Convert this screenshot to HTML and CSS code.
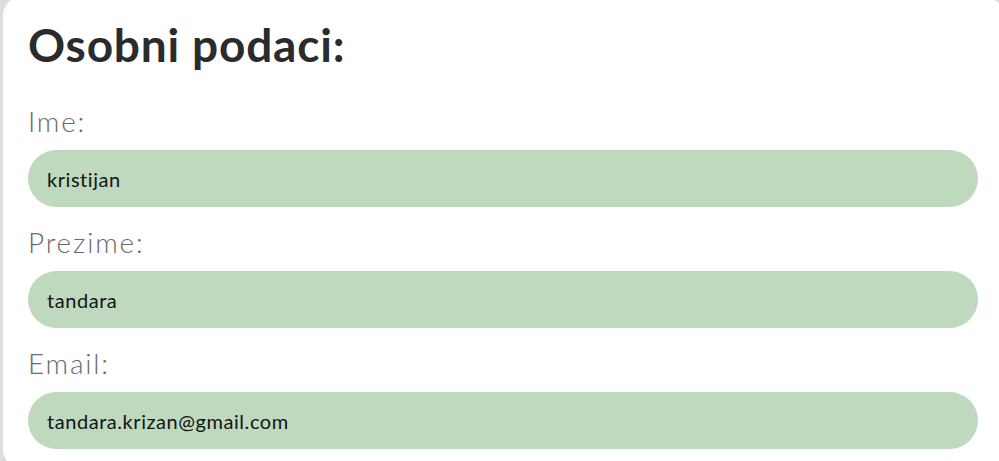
FILE: index.html
```html
<!DOCTYPE html>
<html lang="hr">
<head>
<meta charset="utf-8">
<title>Osobni podaci</title>
<link rel="stylesheet" href="styles.css">
</head>
<body>
<main class="card">
  <h1 class="title">Osobni podaci:</h1>
  <form class="form">
    <div class="field">
      <label class="label" for="ime">Ime:</label>
      <input class="input" id="ime" type="text" value="kristijan">
    </div>
    <div class="field">
      <label class="label" for="prezime">Prezime:</label>
      <input class="input" id="prezime" type="text" value="tandara">
    </div>
    <div class="field">
      <label class="label" for="email">Email:</label>
      <input class="input" id="email" type="email" value="tandara.krizan@gmail.com">
    </div>
  </form>
</main>
</body>
</html>
```

FILE: styles.css
```css
html, body {
  margin: 0;
  padding: 0;
  background: #dedede;
  overflow: hidden;
}

body {
  font-family: Lato, "Open Sans", "Liberation Sans", sans-serif;
}

.card {
  background: #ffffff;
  margin: -4px 0 0 3px;
  width: 1000px;
  border-radius: 20px;
  padding: 25px 0 20px 25px;
  box-sizing: border-box;
}

.title {
  margin: 0;
  font-size: 46px;
  line-height: 48px;
  font-weight: 700;
  letter-spacing: 0.8px;
  color: #2b2b2b;
}

.form {
  display: flex;
  flex-direction: column;
  gap: 18px;
  margin-top: 35px;
}

.field {
  display: flex;
  flex-direction: column;
  gap: 12px;
}

.label {
  font-size: 28px;
  line-height: 34px;
  font-weight: 300;
  letter-spacing: 1.8px;
  color: #6a6a6a;
}

.input {
  width: 950px;
  height: 57px;
  box-sizing: border-box;
  border: none;
  outline: none;
  border-radius: 29px;
  background: #bed9be;
  padding: 0 19px;
  font-family: inherit;
  font-size: 20px;
  letter-spacing: 0.55px;
  color: #141414;
}
```
